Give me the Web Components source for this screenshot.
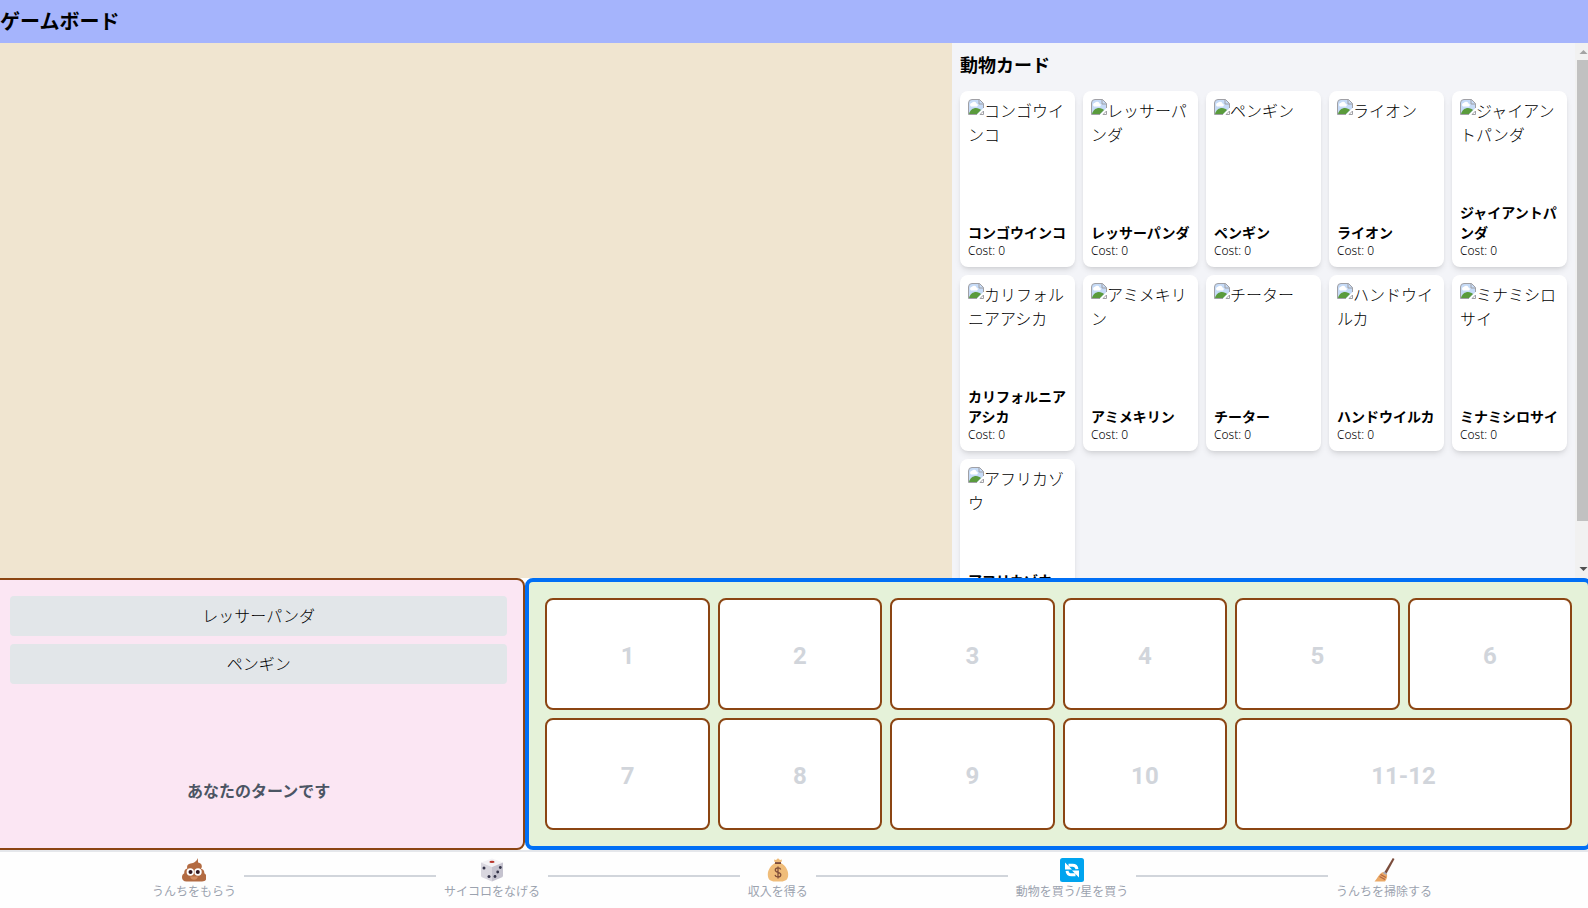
<!DOCTYPE html>
<html lang="ja">
<head>
<meta charset="utf-8">
<title>ゲームボード</title>
<style>
html, body { margin: 0; height: 100%; overflow: hidden; background: #fefefe; }
body { font-family: "Noto Sans", "Noto Sans CJK JP", sans-serif; font-size: 16px; line-height: 24px; font-weight: 300; color: #000; }
</style>
</head>
<body>
<game-app>
  <game-header slot="header">ゲームボード</game-header>
  <game-field slot="field"></game-field>
  <card-shop slot="shop">
    <span slot="title">動物カード</span>
    <animal-card name="コンゴウインコ" cost="0"></animal-card>
    <animal-card name="レッサーパンダ" cost="0"></animal-card>
    <animal-card name="ペンギン" cost="0"></animal-card>
    <animal-card name="ライオン" cost="0"></animal-card>
    <animal-card name="ジャイアントパンダ" cost="0"></animal-card>
    <animal-card name="カリフォルニアアシカ" cost="0"></animal-card>
    <animal-card name="アミメキリン" cost="0"></animal-card>
    <animal-card name="チーター" cost="0"></animal-card>
    <animal-card name="ハンドウイルカ" cost="0"></animal-card>
    <animal-card name="ミナミシロサイ" cost="0"></animal-card>
    <animal-card name="アフリカゾウ" cost="0"></animal-card>
  </card-shop>
  <player-panel slot="player">
    <choice-button>レッサーパンダ</choice-button>
    <choice-button>ペンギン</choice-button>
    <span slot="message">あなたのターンです</span>
  </player-panel>
  <zoo-board slot="zoo">
    <zoo-cell>1</zoo-cell><zoo-cell>2</zoo-cell><zoo-cell>3</zoo-cell>
    <zoo-cell>4</zoo-cell><zoo-cell>5</zoo-cell><zoo-cell>6</zoo-cell>
    <zoo-cell>7</zoo-cell><zoo-cell>8</zoo-cell><zoo-cell>9</zoo-cell>
    <zoo-cell>10</zoo-cell><zoo-cell wide>11-12</zoo-cell>
  </zoo-board>
  <turn-steps slot="steps">
    <turn-step icon="poop">うんちをもらう</turn-step>
    <step-line></step-line>
    <turn-step icon="dice">サイコロをなげる</turn-step>
    <step-line></step-line>
    <turn-step icon="bag">収入を得る</turn-step>
    <step-line></step-line>
    <turn-step icon="swap">動物を買う/星を買う</turn-step>
    <step-line></step-line>
    <turn-step icon="broom">うんちを掃除する</turn-step>
  </turn-steps>
</game-app>
<script>
const define = (name, render) => customElements.define(name, class extends HTMLElement {
  constructor() {
    super();
    this.attachShadow({ mode: 'open' }).innerHTML = render(this);
  }
});

define('game-app', () => `
<style>
:host { display: grid; grid-template-rows: auto minmax(0, 1fr) auto auto; height: 100vh; margin: 0 -4px 0 -8px; }
.top { display: grid; grid-template-columns: 3fr 2fr; min-height: 0; }
.bottom { display: grid; grid-template-columns: 1fr 2fr; }
::slotted(*) { min-width: 0; min-height: 0; }
</style>
<slot name="header"></slot>
<div class="top"><slot name="field"></slot><slot name="shop"></slot></div>
<div class="bottom"><slot name="player"></slot><slot name="zoo"></slot></div>
<slot name="steps"></slot>`);

define('game-header', () => `
<style>
:host { display: block; background: #a5b4fc; padding: 8px 8px 7px; }
h1 { margin: 0; font-size: 20px; line-height: 28px; font-weight: 700; }
</style>
<h1><slot></slot></h1>`);

define('game-field', () => `<style>:host { display: block; background: #f0e5d0; }</style>`);

define('card-shop', () => `
<style>
:host { display: grid; grid-template-columns: minmax(0, 1fr) 17px; background: #f3f4f8; overflow: hidden; }
.content { padding: 8px; overflow: hidden; min-height: 0; }
h2 { margin: 0 0 12px; font-size: 18px; line-height: 28px; font-weight: 700; }
.cards { display: grid; grid-template-columns: repeat(5, minmax(0, 1fr)); gap: 8px; }
.bar { display: grid; grid-template-rows: 17px minmax(0, 1fr) 17px; background: #f1f1f1; }
.thumb { height: 92%; margin: 0 2px; background: #c1c1c1; }
svg { display: block; width: 17px; height: 17px; }
</style>
<div class="content">
  <h2><slot name="title"></slot></h2>
  <div class="cards"><slot></slot></div>
</div>
<div class="bar" aria-hidden="true">
  <svg viewBox="0 0 17 17"><path d="M4.500 11 8.500 7l4 4z" fill="#a3a3a3"/></svg>
  <div><div class="thumb"></div></div>
  <svg viewBox="0 0 17 17"><path d="M4.500 6h8l-4 4z" fill="#505050"/></svg>
</div>`);

define('animal-card', el => `
<style>
:host { display: flex; flex-direction: column; justify-content: space-between; padding: 8px; border-radius: 8px; background: #fff; box-shadow: 0 4px 6px -1px rgba(0,0,0,.1), 0 2px 4px -2px rgba(0,0,0,.1); }
.picture { height: 96px; margin-bottom: 8px; }
svg { width: 16px; height: 16px; vertical-align: top; }
h3 { margin: 0; font-size: 14px; line-height: 20px; font-weight: 700; }
p { margin: 0; font-size: 12px; line-height: 16px; }
</style>
<div class="picture"><svg viewBox="0 0 16 16" aria-hidden="true">
  <path d="M.5 15.500V4A3.500 3.500 0 0 1 4 .5h7.500l4 4V9L9 15.500z" fill="#c6dbf7"/>
  <path d="M3 7.500a2 2 0 0 1 1-3.700 2.500 2.500 0 0 1 4.500.7 1.600 1.600 0 0 1 .5 3z" fill="#fff"/>
  <path d="M1 15c1-4 4-6 7-6 2 0 4 1 5 2l-4 4z" fill="#5a9b3c"/>
  <path d="M.5 15.500V4A3.500 3.500 0 0 1 4 .5h7.500l4 4V9M.5 15.500H9M11 .5v4.500h4.500M12 15.500h3.500V12z" fill="none" stroke="#a0a0a5"/>
</svg>${el.getAttribute('name')}</div>
<div><h3>${el.getAttribute('name')}</h3><p>Cost: ${el.getAttribute('cost')}</p></div>`);

define('player-panel', () => `
<style>
:host { display: flex; flex-direction: column; gap: 8px; padding: 16px; border: 2px solid #8b4513; border-radius: 8px; background: #fbe6f3; }
.message { flex: 1; display: flex; align-items: flex-end; justify-content: center; padding-bottom: 29px; font-weight: 700; color: #4b5563; }
</style>
<slot></slot>
<div class="message"><slot name="message"></slot></div>`);

define('choice-button', () => `
<style>
:host { display: block; }
button { display: block; width: 100%; margin: 0; padding: 8px; border: 0; border-radius: 4px; background: #e2e6e9; color: inherit; font: inherit; }
</style>
<button type="button"><slot></slot></button>`);

define('zoo-board', () => `
<style>
:host { display: grid; grid-template-columns: repeat(6, minmax(0, 1fr)); grid-auto-rows: 112px; gap: 8px; padding: 16px; border: 4px solid #006ff5; border-radius: 8px; background: #e5f2d9; }
</style>
<slot></slot>`);

define('zoo-cell', () => `
<style>
:host { display: flex; align-items: center; justify-content: center; padding-top: 4px; border: 2px solid #8b4513; border-radius: 8px; background: #fff; color: #d1d5db; font-family: Roboto, "Noto Sans CJK JP", sans-serif; font-size: 24px; line-height: 32px; font-weight: 700; }
:host([wide]) { grid-column: span 2; }
</style>
<slot></slot>`);

define('turn-steps', () => `
<style>
:host { display: block; border-top: 2px solid #e5e7eb; padding: 2px 0 8px; }
div { display: flex; align-items: center; gap: 8px; max-width: 1280px; margin: 0 auto; }
</style>
<div><slot></slot></div>`);

define('step-line', () => `<style>:host { flex: 1; height: 2px; background: #d1d5db; margin-bottom: 2px; }</style>`);

const icons = {
  poop: `<path d="M15.500 0c.8 2 .3 3.500.6 4.500 2.400.3 4 2 3.700 4.300-.1.900-.4 1.500-.9 2 2.300.5 3.700 2.200 3.400 4.500 1.400.8 2.200 2.200 2.200 4 0 2.900-1.900 4.200-4.500 4.200H4.500C1.600 23.500 0 22 0 19.300c0-2 .8-3.300 2.300-4-.4-2.400.9-4.300 3-4.700-.8-2.500.4-4.700 3.200-5.100 3.500-.6 6.500-2 7-5.500z" fill="#b36b42"/>
    <circle cx="8.300" cy="14" r="3.700" fill="#fff"/><circle cx="16" cy="14" r="3.700" fill="#fff"/>
    <circle cx="8.500" cy="14" r="2" fill="#32151d"/><circle cx="15.800" cy="14" r="2" fill="#32151d"/>
    <path d="M8 18.500h8c-.5 2-2 3.300-4 3.300s-3.500-1.300-4-3.300z" fill="#d58d63"/>`,
  dice: `<path d="M12 .5 23 4.500 12 9 1 4.500z" fill="#f3f2f5"/><path d="M1 4.500 12 9v14.500L2.500 19.500c-1-.4-1.500-1.200-1.500-2z" fill="#d9d7df"/><path d="M23 4.500 12 9v14.500l9.500-4c1-.4 1.500-1.200 1.500-2z" fill="#c5c3cf"/>
    <ellipse cx="12" cy="3.900" rx="2.600" ry="1.100" fill="#b8372d"/><g fill="#343449"><circle cx="4" cy="10" r="1.500"/><circle cx="9" cy="18.500" r="1.500"/><circle cx="15" cy="18.500" r="1.400"/><circle cx="17.700" cy="14" r="1.400"/><circle cx="20.300" cy="9.500" r="1.400"/></g>`,
  bag: `<path d="M8.500 4 8 1.500l2 .6L12 .3l2 1.800 2-.6-.5 2.500z" fill="#efbb78"/><path d="M9 5h6c4 2 7.200 7 7.200 11.500 0 5-2.700 7-7.200 7H9c-4.500 0-7.200-2-7.200-7C1.800 12 5 7 9 5z" fill="#f0bd7a"/><path d="M9 4.100h6v1.900H9z" fill="#7e4c38"/>
    <path d="M14.700 11.500c-.3-1.100-1.300-1.700-2.700-1.700-1.700 0-2.700.9-2.700 2.200 0 3.200 5.500 1.300 5.500 4.700 0 1.400-1.200 2.200-2.800 2.200s-2.700-.7-3-2M12 8.500v12" fill="none" stroke="#83503a" stroke-width="1.300"/>`,
  swap: `<rect width="24" height="24" rx="2.500" fill="#00a4ef"/><g fill="none" stroke="#fff" stroke-width="3"><path d="M8.500 7.200h4c2.500 0 4.200 1.400 4.400 4"/><path d="M15.500 16.800h-4c-2.500 0-4.200-1.400-4.400-4"/></g><path d="M5 4.500v7h7zM19 19.500v-7h-7z" fill="#fff"/>`,
  broom: `<path d="m20.800 0 1.700 1-8.200 15-2.300-1.300z" fill="#7b4c3b"/><path d="m11.500 14 3.500 2c.6 3-.5 5.500-2 7.500H2.500c3-3 4.500-8.500 9-9.500z" fill="#eba967"/><path d="m12 13.500 3.200 1.900-1 1.600-3.200-1.800z" fill="#a9abba"/><path d="m8.500 16.500 5.500 3M7.500 18.500l5.500 3" stroke="#b26541" stroke-width="1.300"/>`
};

define('turn-step', el => `
<style>
:host { display: flex; flex-direction: column; align-items: center; gap: 2px; flex: none; font-size: 12px; line-height: 16px; font-weight: 400; color: #9ca3af; }
svg { width: 24px; height: 24px; margin-top: 4px; }
</style>
<svg viewBox="0 0 24 24" aria-hidden="true">${icons[el.getAttribute('icon')]}</svg>
<span><slot></slot></span>`);
</script>
</body>
</html>
